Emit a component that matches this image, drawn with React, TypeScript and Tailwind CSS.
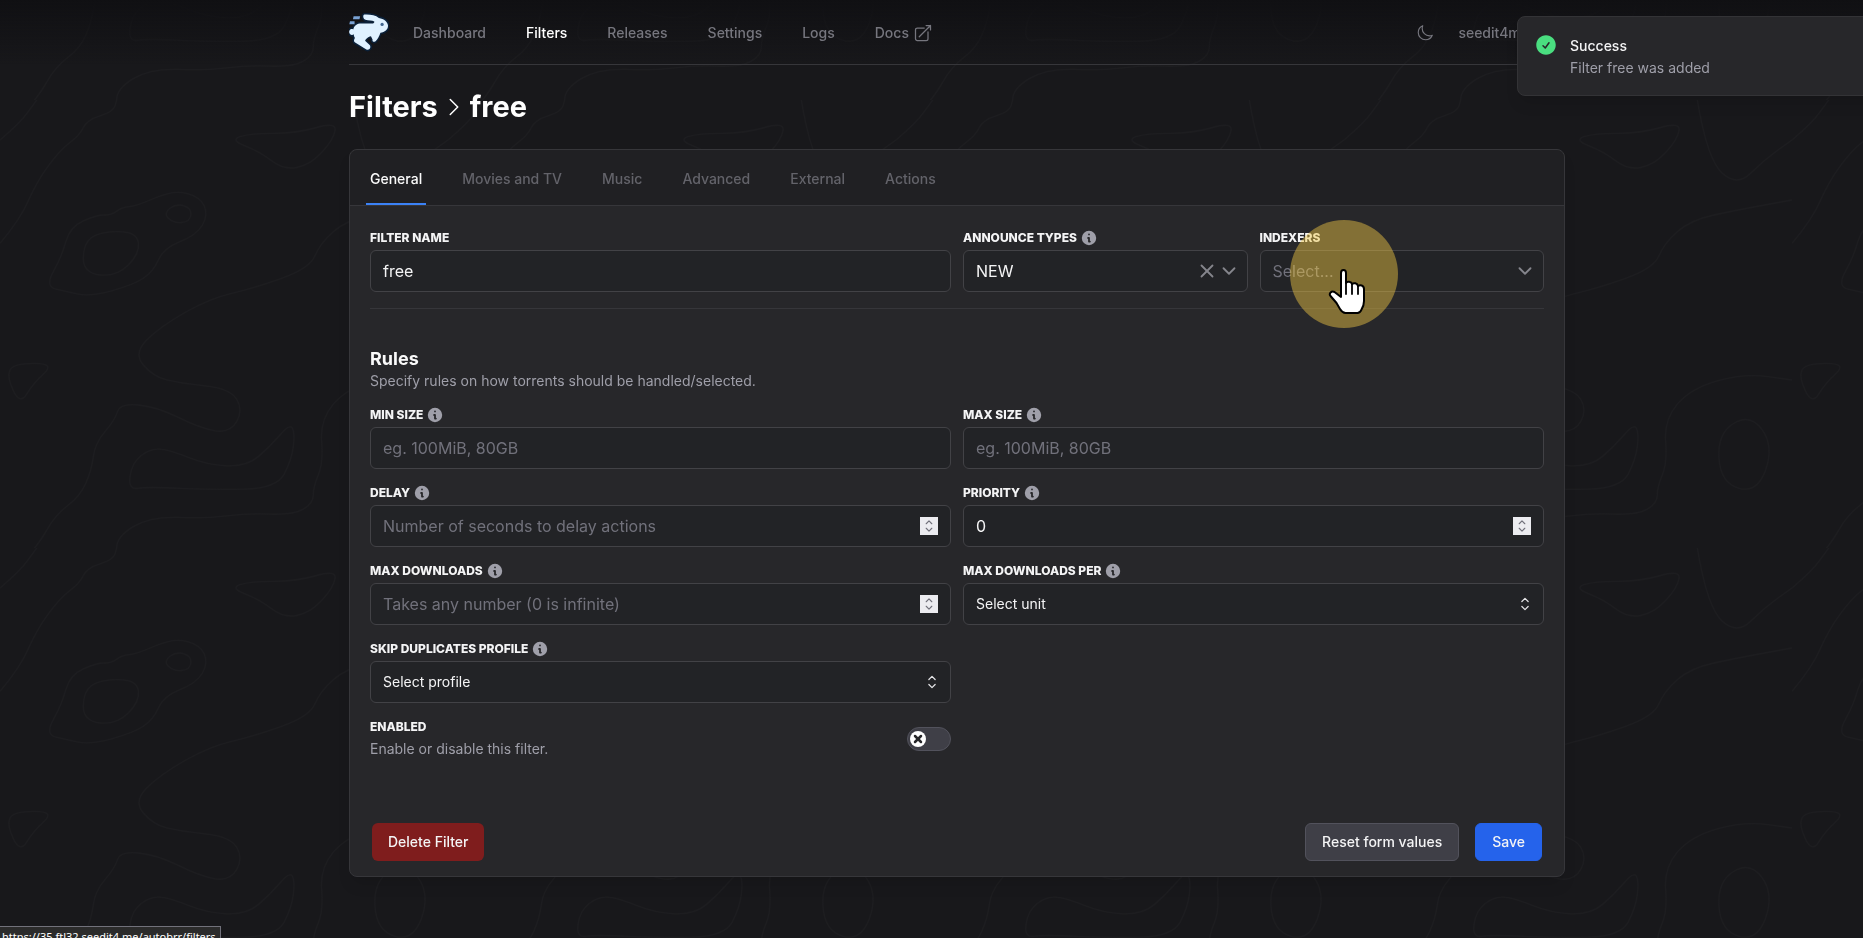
import { useState } from "react";
import type { ReactNode } from "react";
import { ChevronDown, X } from "lucide-react";
import { HiInformationCircle } from "react-icons/hi";
import {
  HiCheckCircle,
  HiOutlineArrowTopRightOnSquare,
  HiOutlineChevronRight,
  HiOutlineChevronUpDown,
  HiOutlineMoon,
} from "react-icons/hi2";

type Point = [number, number];

const NAV_LINKS = ["Dashboard", "Filters", "Releases", "Settings", "Logs"];
const TABS = ["General", "Movies and TV", "Music", "Advanced", "External", "Actions"];

const OPEN_CONTOURS: Point[][] = [
  [[0, 430], [60, 360], [110, 245], [180, 150], [240, 105], [260, 60], [340, 35], [350, 0]],
  [
    [0, 1465], [110, 1345], [165, 1245], [240, 1190], [275, 1110], [285, 1030], [345, 960],
    [360, 910], [470, 920], [600, 985], [690, 1000], [730, 930], [690, 865], [540, 850],
    [460, 830], [400, 760], [480, 680], [630, 595], [760, 565], [930, 505], [960, 430], [1040, 360],
    [1180, 330], [1344, 300],
  ],
  [
    [350, 1344], [350, 1310], [450, 1250], [620, 1255], [740, 1240], [880, 1245], [940, 1210],
    [940, 1160], [970, 1090], [960, 960], [1040, 865], [1200, 820], [1344, 840],
  ],
  [[0, 120], [60, 70], [110, 0]],
  [[1060, 0], [1090, 180], [1180, 260], [1260, 180], [1344, 120]],
];

const CLOSED_CONTOURS: Point[][] = [
  [
    [135, 560], [185, 470], [210, 380], [290, 345], [335, 345], [365, 322], [410, 318],
    [520, 270], [600, 290], [625, 345], [590, 405], [490, 445], [460, 515], [400, 555],
    [270, 590], [200, 575],
  ],
  [
    [385, 1170], [395, 1090], [450, 1045], [510, 1050], [620, 1095], [740, 1100], [810, 1040],
    [870, 970], [885, 1000], [875, 1080], [830, 1165], [640, 1170], [440, 1160],
  ],
  [[20, 830], [40, 790], [165, 790], [100, 850], [60, 915]],
  [[690, 120], [750, 100], [890, 100], [1010, 65], [1000, 120], [930, 195], [850, 210], [780, 155]],
  [[250, 430], [300, 395], [410, 395], [420, 460], [350, 530], [250, 520]],
  [[490, 340], [530, 310], [575, 325], [570, 365], [520, 370]],
  [[1120, 1000], [1220, 940], [1290, 1040], [1240, 1180], [1130, 1150]],
];

function toPath(points: Point[], closed: boolean) {
  const mid = (a: Point, b: Point) => `${(a[0] + b[0]) / 2} ${(a[1] + b[1]) / 2}`;
  if (closed) {
    const last = points[points.length - 1];
    const curves = points.map(
      (p, i) => `Q${p[0]} ${p[1]} ${mid(p, points[(i + 1) % points.length])}`
    );
    return `M${mid(last, points[0])}${curves.join("")}Z`;
  }
  const inner = points.slice(1, -1).map((p, i) => `Q${p[0]} ${p[1]} ${mid(p, points[i + 2])}`);
  const end = points[points.length - 1];
  return `M${points[0][0]} ${points[0][1]}${inner.join("")}L${end[0]} ${end[1]}`;
}

function Topography() {
  return (
    <svg className="pointer-events-none fixed inset-0 h-full w-full" aria-hidden="true">
      <defs>
        <pattern id="topography" y="100" width="448" height="448" patternUnits="userSpaceOnUse">
          <g transform="scale(0.3333)" fill="none" stroke="#1d1d20" strokeWidth="4">
            {OPEN_CONTOURS.map((points, i) => (
              <path key={i} d={toPath(points, false)} />
            ))}
            {CLOSED_CONTOURS.map((points, i) => (
              <path key={i} d={toPath(points, true)} />
            ))}
          </g>
        </pattern>
      </defs>
      <rect width="100%" height="100%" fill="url(#topography)" />
    </svg>
  );
}

function Logo() {
  return (
    <svg viewBox="13 20 122 120" className="h-10 w-10" aria-hidden="true">
      <g stroke="#0b2038" strokeWidth="10" strokeLinejoin="round" fill="#0b2038">
        <RabbitShape />
      </g>
      <g fill="#dff1ff">
        <RabbitShape />
      </g>
      <path d="M27 32h20l-2 9H25zM16 47h14v9H14z" fill="#7aa2d4" />
      <circle cx="114" cy="57" r="5" fill="#41658f" />
    </svg>
  );
}

function RabbitShape() {
  return (
    <path d="M60 27C76 26 94 29 104 37C120 39 132 50 132 61C132 73 122 81 109 82C105 92 101 101 94 108C89 112 83 109 85 104L80 93C72 94 64 101 62 107L76 120C82 127 74 137 66 133L33 113C26 109 28 103 31 98C28 94 27 90 28 87C20 93 11 85 14 77C16 70 22 70 26 72C29 60 38 54 50 54H84C88 54 91 51 90 48C84 45 72 45 63 43C56 41 54 29 60 27Z" />
  );
}

function Nav() {
  return (
    <header className="flex h-[65px] items-center justify-between border-b border-[#36363a]">
      <div className="flex items-center gap-6">
        <a href="#home" aria-label="Home">
          <Logo />
        </a>
        <nav className="flex items-center gap-10 pt-0.5 text-sm font-medium text-[#76767e]">
          {NAV_LINKS.map((label) => (
            <a
              key={label}
              href={`#${label.toLowerCase()}`}
              className={label === "Filters" ? "text-white" : ""}
            >
              {label}
            </a>
          ))}
          <a href="#docs" className="flex items-center gap-1">
            Docs
            <HiOutlineArrowTopRightOnSquare className="size-5" />
          </a>
        </nav>
      </div>
      <div className="flex items-center gap-6 pt-0.5 pr-9 text-sm font-medium text-[#76767e]">
        <button type="button" aria-label="Toggle theme">
          <HiOutlineMoon className="size-[18px]" />
        </button>
        <button type="button">seedit4me</button>
      </div>
    </header>
  );
}

function Toast() {
  return (
    <div
      role="status"
      className="absolute top-4 left-[calc(100%-346px)] flex w-96 items-start rounded-lg border border-[#333336] bg-[#27272a] p-4 shadow-lg"
    >
      <HiCheckCircle className="size-6 shrink-0 text-[#4ade80]" />
      <div className="ml-3 pt-[3px] pb-px text-sm">
        <p className="font-medium text-zinc-100">Success</p>
        <p className="mt-0.5 text-zinc-400">Filter free was added</p>
      </div>
    </div>
  );
}

const boxClass =
  "flex h-[42px] w-full items-center rounded-md border border-[#424246] bg-[#222326] text-zinc-100";

interface FieldProps {
  id: string;
  label: string;
  info?: boolean;
  className?: string;
  children: ReactNode;
}

function Field({ id, label, info, className = "col-span-6", children }: FieldProps) {
  return (
    <div className={className}>
      <div className="mb-1 flex h-4 items-center gap-[3px]">
        <label htmlFor={id} className="text-xs font-extrabold text-zinc-100 uppercase">
          {label}
        </label>
        {info && <HiInformationCircle className="size-[18px] text-zinc-400" />}
      </div>
      {children}
    </div>
  );
}

interface TextFieldProps {
  id: string;
  label: string;
  info?: boolean;
  value?: string;
  placeholder?: string;
  numeric?: boolean;
}

function TextField({ id, label, info, value = "", placeholder, numeric }: TextFieldProps) {
  return (
    <Field id={id} label={label} info={info}>
      <div className={boxClass}>
        <input
          id={id}
          type={numeric ? "number" : "text"}
          defaultValue={value}
          placeholder={placeholder}
          className="h-full min-w-0 flex-1 px-3 text-base outline-none [appearance:textfield] placeholder:text-zinc-500 [&::-webkit-inner-spin-button]:appearance-none"
        />
        {numeric && (
          <span className="mr-3 flex size-[18px] items-center justify-center bg-[#ececf0] text-zinc-500">
            <HiOutlineChevronUpDown className="size-[18px]" />
          </span>
        )}
      </div>
    </Field>
  );
}

function ListField({ id, label, option }: { id: string; label: string; option: string }) {
  return (
    <Field id={id} label={label} info>
      <div className={`${boxClass} relative`}>
        <select id={id} className="h-full w-full appearance-none px-3 text-sm outline-none">
          <option>{option}</option>
        </select>
        <HiOutlineChevronUpDown className="pointer-events-none absolute right-2 size-5 text-zinc-200" />
      </div>
    </Field>
  );
}

function MultiSelect({ id, value, clearable }: { id: string; value: string; clearable?: boolean }) {
  return (
    <div className={`${boxClass} relative border-[#4a4a52]`}>
      <select
        id={id}
        className={`h-full w-full appearance-none px-3 text-base outline-none ${
          clearable ? "text-zinc-100" : "text-zinc-500"
        }`}
      >
        <option>{value}</option>
      </select>
      <div className="absolute right-[7px] flex items-center text-[#85858c]">
        {clearable && (
          <button type="button" aria-label="Clear">
            <X className="size-[22px]" />
          </button>
        )}
        <ChevronDown className="pointer-events-none size-[22px]" />
      </div>
    </div>
  );
}

function ClickPointer() {
  return (
    <div className="pointer-events-none absolute -top-2.5 left-[30px] z-10 size-[108px] rounded-full bg-[rgb(244_201_69/0.45)]">
      <svg viewBox="0 0 38 46" className="absolute top-[49px] left-[38px] h-[46px] w-[38px]" aria-hidden="true">
        <path
          d="M13 4C13 0 18 0 18 4V14C19 12 23.500 12.500 24 15C25.500 13.500 29.500 14 30 17C32 15.500 36 16 36 20V32C36 36 35 38 33.500 40.500C32.500 42.800 32 44 29.500 44H17.500C14.500 44 13.500 42.500 12 40L8.500 34L2.500 27C0.500 24.500 3.500 21.500 6.500 23L13 28Z"
          fill="#fff"
          stroke="#000"
          strokeWidth="2"
          strokeLinejoin="round"
        />
        <path d="M18 14v11M24 15v10M30 17v8" stroke="#000" strokeWidth="1.800" strokeLinecap="round" />
      </svg>
    </div>
  );
}

function EnabledSwitch() {
  const [enabled, setEnabled] = useState(false);
  return (
    <button
      id="enabled"
      type="button"
      role="switch"
      aria-checked={enabled}
      onClick={() => setEnabled(!enabled)}
      className={`mt-2 flex h-6 w-11 items-center rounded-full border border-zinc-600 px-0.5 ${
        enabled ? "justify-end bg-blue-500" : "bg-zinc-700"
      }`}
    >
      <span className="flex size-4 items-center justify-center rounded-full bg-white text-zinc-800">
        <X className="size-3" strokeWidth={5} />
      </span>
    </button>
  );
}

function Tabs() {
  return (
    <nav className="flex gap-8 rounded-t-lg border-b border-[#36363a] bg-[#202023] px-4 text-sm font-medium text-[#63636a]">
      {TABS.map((tab, i) => (
        <a
          key={tab}
          href={`#${tab.toLowerCase().replaceAll(" ", "-")}`}
          className={`flex h-[55px] items-center border-b-2 px-1 pt-1 ${
            i === 0 ? "border-[#3b82f6] text-zinc-50" : "border-transparent"
          }`}
        >
          {tab}
        </a>
      ))}
    </nav>
  );
}

function FilterForm() {
  return (
    <form className="px-5 pt-6 pb-[15px]" onSubmit={(e) => e.preventDefault()}>
      <div className="grid grid-cols-12 gap-3 border-b border-[#36363a] pb-4">
        <TextField id="name" label="Filter name" value="free" />
        <Field id="announce-types" label="Announce types" info className="col-span-3">
          <MultiSelect id="announce-types" value="NEW" clearable />
        </Field>
        <Field id="indexers" label="Indexers" className="relative col-span-3">
          <MultiSelect id="indexers" value="Select..." />
          <ClickPointer />
        </Field>
      </div>

      <h2 className="mt-[38px] text-lg leading-6 font-bold text-zinc-50">Rules</h2>
      <p className="text-sm text-zinc-400">
        Specify rules on how torrents should be handled/selected.
      </p>

      <div className="mt-4 grid grid-cols-12 gap-x-3 gap-y-4">
        <TextField id="min-size" label="Min size" info placeholder="eg. 100MiB, 80GB" />
        <TextField id="max-size" label="Max size" info placeholder="eg. 100MiB, 80GB" />
        <TextField id="delay" label="Delay" info numeric placeholder="Number of seconds to delay actions" />
        <TextField id="priority" label="Priority" info numeric value="0" />
        <TextField
          id="max-downloads"
          label="Max downloads"
          info
          numeric
          placeholder="Takes any number (0 is infinite)"
        />
        <ListField id="max-downloads-per" label="Max downloads per" option="Select unit" />
        <ListField id="skip-duplicates" label="Skip duplicates profile" option="Select profile" />
        <div className="col-span-6 col-start-1 flex items-start justify-between">
          <div>
            <label htmlFor="enabled" className="block text-xs font-extrabold text-zinc-100 uppercase">
              Enabled
            </label>
            <p className="mt-1 text-sm text-zinc-400">Enable or disable this filter.</p>
          </div>
          <EnabledSwitch />
        </div>
      </div>

      <div className="mt-16 flex justify-between px-0.5 text-sm font-medium text-zinc-100">
        <button type="button" className="h-[38px] rounded-md bg-[#7f1d1d] px-4">
          Delete Filter
        </button>
        <div className="flex gap-4">
          <button type="reset" className="h-[38px] rounded-md border border-zinc-600 bg-zinc-700 px-4">
            Reset form values
          </button>
          <button
            type="submit"
            className="h-[38px] rounded-md border border-[#2563eb] bg-[#2563eb] px-4"
          >
            Save
          </button>
        </div>
      </div>
    </form>
  );
}

export default function App() {
  return (
    <div className="relative h-screen overflow-hidden bg-[#18181b] font-[Inter,sans-serif]">
      <Topography />
      <div className="absolute inset-x-0 top-0 h-16 bg-linear-to-b from-[#101013] to-transparent" />
      <div className="relative pl-[51px]">
        <div className="mx-auto max-w-7xl px-8">
          <Nav />
          <h1 className="mt-6 flex items-center gap-1 text-[29px] leading-9 font-bold text-white">
            Filters
            <HiOutlineChevronRight className="size-6" />
            free
          </h1>
          <main className="mt-6 rounded-lg border border-[#36363a] bg-[#27272a] shadow-lg">
            <Tabs />
            <FilterForm />
          </main>
        </div>
      </div>
      <Toast />
      <div className="absolute bottom-0 left-0 h-3 overflow-hidden border-t border-r border-zinc-500 bg-[#2b2b2b] pr-1 pl-0.5 font-['Noto_Sans',sans-serif] text-[11px] leading-4 text-white">
        <p className="mt-0.5">https://35.ftl32.seedit4.me/autobrr/filters</p>
      </div>
    </div>
  );
}
